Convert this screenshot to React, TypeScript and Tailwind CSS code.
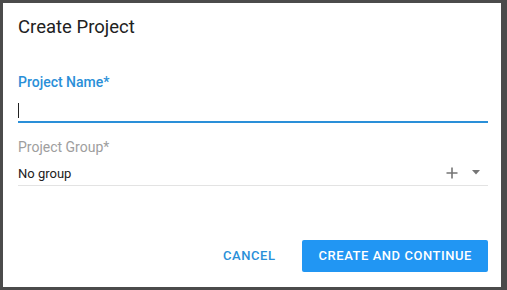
import React, { useState } from 'react'

export default function App() {
  const [name, setName] = useState('')

  return (
    <div
      className="w-[507px] h-[290px] bg-[#4b4b4b] pt-[3px] pl-[3px] pr-[6px] pb-[3px] flex"
      style={{ fontFamily: 'Roboto, "Liberation Sans", sans-serif' }}
    >
      <div className="flex-1 bg-white flex flex-col pl-[15px] pr-[13px] pt-[12px]">
        <h1 className="text-[18.5px] leading-[24px] text-[#212121] font-normal">Create Project</h1>

        {/* Project name */}
        <div className="mt-[35px] flex flex-col">
          <label className="text-[14px] leading-[16px] font-medium text-[#2a8fd8]">Project Name*</label>
          <div className="h-[33px] border-b-2 border-[#2a8fd8] flex items-end pb-[3px]">
            <span className="w-px h-[15px] bg-[#222]" />
            <input
              value={name}
              onChange={e => setName(e.target.value)}
              className="flex-1 outline-none text-[13px] text-[#212121] bg-transparent"
            />
          </div>
        </div>

        {/* Project group */}
        <div className="mt-[16px] flex flex-col">
          <label className="text-[14px] leading-[16px] text-[#9e9e9e]">Project Group*</label>
          <div className="h-[31px] border-b border-[#e3e3e3] flex items-center">
            <span className="flex-1 text-[13px] text-[#212121] pt-[7px]">No group</span>
            <svg width="12" height="12" viewBox="0 0 12 12" className="mr-[14px] mt-[6px]">
              <path d="M6 0.5v11M0.5 6h11" stroke="#757575" strokeWidth="1.6" />
            </svg>
            <svg width="8" height="5" viewBox="0 0 8 5" className="mr-[8px] mt-[4px]">
              <path d="M0 0h8L4 4.5z" fill="#757575" />
            </svg>
          </div>
        </div>

        {/* Actions */}
        <div className="mt-auto mb-[15px] flex justify-end items-center gap-[11px]">
          <button className="h-[32px] px-[16px] text-[13px] font-medium text-[#2a8fd8] tracking-[0.55px]">
            CANCEL
          </button>
          <button className="h-[32px] px-[16px] rounded-[2px] bg-[#2196f3] text-white text-[13px] font-medium tracking-[0.55px]">
            CREATE AND CONTINUE
          </button>
        </div>
      </div>
    </div>
  )
}
